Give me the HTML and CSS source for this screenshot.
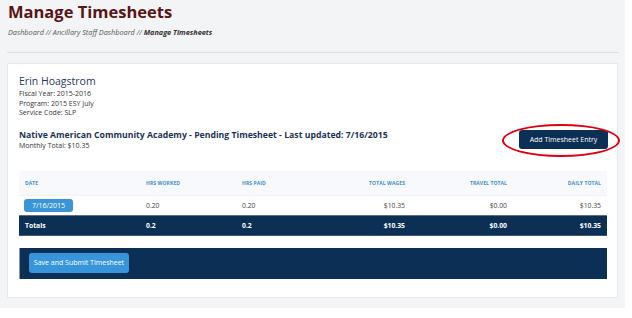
FILE: index.html
```html
<!DOCTYPE html>
<html>
<head>
<meta charset="utf-8">
<link rel="stylesheet" href="styles.css">
</head>
<body>
<div class="page">
  <div class="head">
    <h1 class="title">Manage Timesheets</h1>
    <div class="crumbs">Dashboard // Ancillary Staff Dashboard // <b>Manage Timesheets</b></div>
  </div>
  <div class="rule"></div>
  <div class="card">
    <div class="name">Erin Hoagstrom</div>
    <div class="meta">Fiscal Year: 2015-2016</div>
    <div class="meta">Program: 2015 ESY July</div>
    <div class="meta">Service Code: SLP</div>
    <div class="sheet-row">
      <div class="sheet-info">
        <div class="sheet-title">Native American Community Academy - Pending Timesheet - Last updated: 7/16/2015</div>
        <div class="meta">Monthly Total: $10.35</div>
      </div>
      <div class="add-wrap">
        <button class="btn-navy">Add Timesheet Entry</button>
        <span class="ring"></span>
      </div>
    </div>
    <table class="grid">
      <thead>
        <tr>
          <th class="c1">Date</th>
          <th class="c2">Hrs Worked</th>
          <th class="c3">Hrs Paid</th>
          <th class="c4 r">Total Wages</th>
          <th class="c5 r">Travel Total</th>
          <th class="c6 r">Daily Total</th>
        </tr>
      </thead>
      <tbody>
        <tr class="entry">
          <td><span class="date-btn">7/16/2015</span></td>
          <td>0.20</td>
          <td>0.20</td>
          <td class="r">$10.35</td>
          <td class="r">$0.00</td>
          <td class="r">$10.35</td>
        </tr>
        <tr class="totals">
          <td>Totals</td>
          <td>0.2</td>
          <td>0.2</td>
          <td class="r">$10.35</td>
          <td class="r">$0.00</td>
          <td class="r">$10.35</td>
        </tr>
      </tbody>
    </table>
    <div class="footer-bar">
      <button class="btn-blue">Save and Submit Timesheet</button>
    </div>
  </div>
</div>
</body>
</html>
```

FILE: styles.css
```css
* { box-sizing: border-box; }
html, body { margin: 0; padding: 0; background: #ffffff; }
body { font-family: "Open Sans", "Liberation Sans", sans-serif; }

.page {
  width: 625px;
  height: 308px;
  background: #f3f4f6;
  padding-top: 1px;
  overflow: hidden;
}

.head { padding-left: 8px; }
.title {
  margin: 0;
  font-size: 16.5px;
  line-height: 22px;
  font-weight: 700;
  color: #5a1414;
}
.crumbs {
  margin-top: 4px;
  font-size: 7.3px;
  line-height: 10px;
  font-style: italic;
  color: #5a5a5a;
}
.crumbs b { color: #333; font-weight: 700; }

.rule {
  margin: 15px 0 0 7px;
  width: 612px;
  height: 1px;
  background: #dcdfe3;
}

.card {
  margin: 10px 0 0 7px;
  width: 611px;
  height: 235px;
  background: #ffffff;
  border: 1px solid #e6e8eb;
  padding: 11px 10px 0 11px;
}

.name {
  font-size: 10.5px;
  line-height: 13px;
  color: #1f3a5e;
}
.meta {
  font-size: 7px;
  line-height: 9.5px;
  color: #333;
}
.name + .meta { margin-top: 1px; }

.sheet-row {
  margin-top: 12px;
  display: flex;
  justify-content: space-between;
  align-items: flex-start;
}
.sheet-title {
  font-size: 8.7px;
  line-height: 11px;
  font-weight: 700;
  color: #1b3458;
}
.add-wrap { position: relative; }
.btn-navy {
  display: block;
  width: 89px;
  height: 19px;
  margin-right: -1px;
  border: 0;
  border-radius: 3px;
  background: #0c2f55;
  color: #ffffff;
  font-family: inherit;
  font-size: 7px;
  padding: 0;
}
.ring {
  position: absolute;
  left: -17px;
  top: -6px;
  width: 118px;
  height: 33px;
  border: 2.5px solid #e0000f;
  border-radius: 50%;
}

.grid {
  margin-top: 21px;
  width: 588px;
  border-collapse: collapse;
  table-layout: fixed;
}
.grid th, .grid td { padding: 0 6px; text-align: left; }
.grid .r { text-align: right; }
.c1 { width: 121px; }
.c2 { width: 96px; }
.c3 { width: 84px; }
.c4 { width: 91px; }
.c5 { width: 102px; }
.c6 { width: 94px; }

.grid thead tr { background: #f7f9fc; }
.grid th {
  height: 24px;
  font-size: 5px;
  font-weight: 700;
  text-transform: uppercase;
  color: #3b8fd2;
  letter-spacing: 0.1px;
  border-bottom: 1px solid #eef1f5;
}
.entry td {
  height: 20px;
  font-size: 6.8px;
  color: #444;
  border-bottom: 1px solid #5e6f80;
}
.date-btn {
  display: inline-block;
  width: 49px;
  height: 13px;
  line-height: 13px;
  margin-left: -1px;
  text-align: center;
  background: #3a95d6;
  border-radius: 3px;
  color: #ffffff;
  font-size: 7px;
}
.totals { background: #0c2f55; }
.totals td {
  height: 20px;
  font-size: 6.8px;
  font-weight: 700;
  color: #ffffff;
  border-bottom: 1px solid #3d5876;
}

.footer-bar {
  margin-top: 12px;
  width: 588px;
  height: 31px;
  background: #0c2f55;
  border-left: 1px solid #8a9bb0;
  padding: 5px 0 0 9px;
}
.btn-blue {
  display: block;
  width: 100px;
  height: 20px;
  border: 0;
  border-radius: 3px;
  background: #3796db;
  color: #ffffff;
  font-family: inherit;
  font-size: 7px;
  padding: 0;
}
```
